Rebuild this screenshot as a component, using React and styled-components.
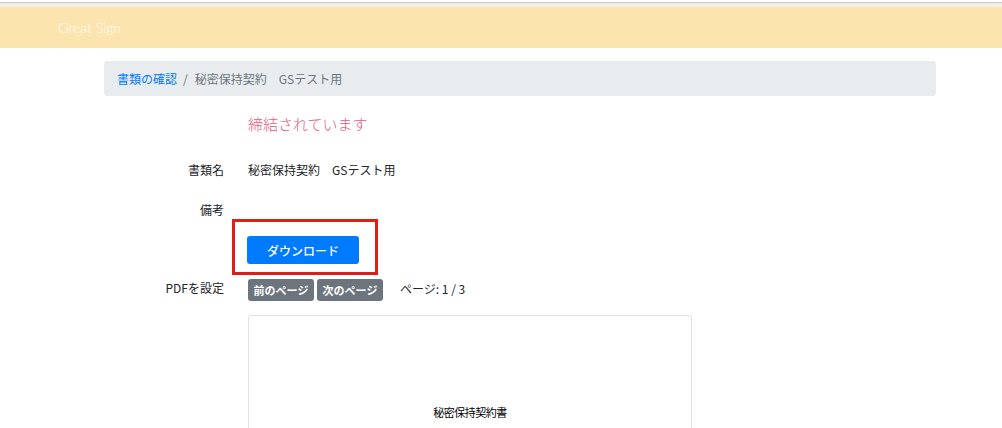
import styled, { createGlobalStyle } from "styled-components";

const GlobalStyle = createGlobalStyle`
  body {
    margin: 0;
    background: #fff;
    font-family: "Noto Sans CJK JP", "Liberation Sans", sans-serif;
    color: #212529;
  }
`;

const TopEdge = styled.div`
  height: 2px;
  background: #fff;
  border-bottom: 1px solid #cbcbcb;
`;

const Shade = styled.div`
  height: 4px;
  background: linear-gradient(#ececec, #f6f2ea);
`;

const Header = styled.header`
  height: 41px;
  background: #fbe4ae;
  display: flex;
  align-items: center;
  padding-left: 58px;
`;

const Brand = styled.span`
  font-family: "Lato", "Liberation Sans", sans-serif;
  font-weight: 300;
  font-size: 14.5px;
  color: #fff;
  letter-spacing: -0.2px;
  opacity: 0.95;
`;

const Main = styled.main`
  padding: 13px 66px 0 104px;
`;

const Breadcrumb = styled.nav`
  height: 35px;
  background: #e9ecef;
  border-radius: 3px;
  display: flex;
  align-items: center;
  padding-left: 13px;
  font-size: 12px;
  color: #6c757d;
`;

const Crumb = styled.a`
  color: #007bff;
`;

const Sep = styled.span`
  padding: 0 7px 0 6px;
`;

const Form = styled.div`
  display: grid;
  grid-template-columns: 120px 1fr;
  column-gap: 24px;
  margin-top: 18px;
`;

const Label = styled.div`
  text-align: right;
  font-size: 12px;
  height: ${(p) => p.h || 40}px;
  line-height: ${(p) => p.lh || 16}px;
  padding-top: ${(p) => p.pt || 0}px;
  box-sizing: border-box;
`;

const Value = styled.div`
  font-size: 12px;
  height: ${(p) => p.h || 40}px;
  line-height: ${(p) => p.lh || 16}px;
  padding-top: ${(p) => p.pt || 0}px;
  box-sizing: border-box;
  display: flex;
  align-items: flex-start;
  gap: ${(p) => p.gap || 0}px;
`;

const Status = styled.div`
  color: #e35a7c;
  font-size: 15px;
  font-weight: 300;
  line-height: 20px;
  height: 46px;
`;

const Highlight = styled.div`
  margin-left: -16px;
  width: 128px;
  height: 44px;
  border: 3px solid #e31b1b;
  display: flex;
  align-items: center;
  padding-left: 12px;
  padding-top: 6px;
  box-sizing: content-box;
`;

const Primary = styled.button`
  width: 112px;
  height: 28px;
  border: none;
  border-radius: 3px;
  background: #007bff;
  color: #fff;
  font-family: inherit;
  font-size: 12px;
  font-weight: 500;
  padding: 0;
`;

const Small = styled.button`
  height: 22px;
  width: 66px;
  padding: 0;
  border: none;
  border-radius: 3px;
  background: #6c757d;
  color: #fff;
  font-family: inherit;
  font-size: 11px;
  font-weight: 700;
`;

const PageInfo = styled.span`
  margin-left: 14px;
  font-size: 12px;
  line-height: 20px;
`;

const Viewer = styled.div`
  margin-top: 14px;
  width: 444px;
  height: 140px;
  border: 1px solid #dee2e6;
  border-radius: 3px;
  display: flex;
  justify-content: center;
  padding-top: 88px;
  box-sizing: border-box;
`;

const DocTitle = styled.span`
  font-family: "Noto Sans CJK JP", sans-serif;
  font-size: 11px;
  color: #000;
  letter-spacing: -0.5px;
`;

export default function App() {
  return (
    <>
      <GlobalStyle />
      <TopEdge />
      <Shade />
      <Header>
        <Brand>Great Sign</Brand>
      </Header>
      <Main>
        <Breadcrumb>
          <Crumb>書類の確認</Crumb>
          <Sep>/</Sep>
          <span>秘密保持契約　GSテスト用</span>
        </Breadcrumb>
        <Form>
          <div />
          <Status>締結されています</Status>
          <Label h={40} pt={2}>書類名</Label>
          <Value h={40} pt={2}>秘密保持契約　GSテスト用</Value>
          <Label h={19} pt={2}>備考</Label>
          <Value h={19} />
          <div />
          <Value h={60}>
            <Highlight>
              <Primary>ダウンロード</Primary>
            </Highlight>
          </Value>
          <Label h={30} pt={1}>PDFを設定</Label>
          <div>
            <Value h={22} gap={3}>
              <Small>前のページ</Small>
              <Small>次のページ</Small>
              <PageInfo>ページ: 1 / 3</PageInfo>
            </Value>
            <Viewer>
              <DocTitle>秘密保持契約書</DocTitle>
            </Viewer>
          </div>
        </Form>
      </Main>
    </>
  );
}
